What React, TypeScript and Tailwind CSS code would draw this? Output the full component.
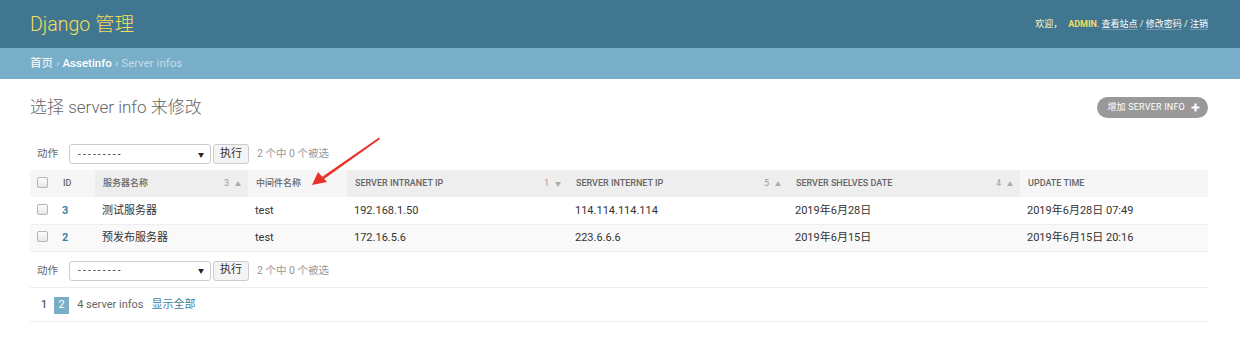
import React from 'react';

const font = { fontFamily: 'Roboto, "Noto Sans CJK SC", "Liberation Sans", sans-serif' };

const Box = () => (
  <span className="inline-block w-[11px] h-[11px] rounded-[2px] border border-[#b5b5b5] bg-gradient-to-b from-[#fdfdfd] to-[#e6e6e6] align-middle" />
);

const ActionBar = () => (
  <div className="flex items-center h-[22px] text-[10.5px] text-[#666]">
    <span className="ml-[7px] w-[32px]">动作</span>
    <div className="flex items-center justify-between w-[142px] h-[20px] border border-[#ccc] rounded-[3px] bg-white pl-[8px] pr-[6px] text-[#333]">
      <span className="tracking-[2.2px] text-[10px]">---------</span>
      <span className="text-[6px] text-[#222]">▼</span>
    </div>
    <div className="ml-[2px] flex items-center justify-center w-[36px] h-[20px] border border-[#ccc] rounded-[3px] bg-[#f4f4f4] text-[11px] text-[#333]">执行</div>
    <span className="ml-[8px] text-[#999]">2 个中 0 个被选</span>
  </div>
);

type Col = { label: string; w: number; num?: string; dir?: string; sorted?: boolean };
const cols: Col[] = [
  { label: '', w: 25 },
  { label: 'ID', w: 40 },
  { label: '服务器名称', w: 153, num: '3', dir: '▲', sorted: true },
  { label: '中间件名称', w: 99 },
  { label: 'SERVER INTRANET IP', w: 221, num: '1', dir: '▼', sorted: true },
  { label: 'SERVER INTERNET IP', w: 220, num: '5', dir: '▲', sorted: true },
  { label: 'SERVER SHELVES DATE', w: 232, num: '4', dir: '▲', sorted: true },
  { label: 'UPDATE TIME', w: 188 },
];

const rows = [
  ['3', '测试服务器', 'test', '192.168.1.50', '114.114.114.114', '2019年6月28日', '2019年6月28日 07:49'],
  ['2', '预发布服务器', 'test', '172.16.5.6', '223.6.6.6', '2019年6月15日', '2019年6月15日 20:16'],
];

export default function App() {
  return (
    <div className="relative w-[1240px] h-[347px] bg-white overflow-hidden" style={font}>
      {/* Header */}
      <div className="flex items-center justify-between h-[48px] bg-[#417690] px-[30px]">
        <div className="text-[19.5px] font-light text-[#f5dd5d] mt-[1px]">Django 管理</div>
        <div className="text-[9px] text-[#ffffcc] mr-[2px] mt-[1px]">
          欢迎，<span className="ml-[6px] font-bold text-[#f5dd5d]">ADMIN</span>.{' '}
          <span className="text-white border-b border-white/25">查看站点</span> /{' '}
          <span className="text-white border-b border-white/25">修改密码</span> /{' '}
          <span className="text-white border-b border-white/25">注销</span>
        </div>
      </div>
      {/* Breadcrumbs */}
      <div className="flex items-center h-[31px] bg-[#79aec8] px-[30px] text-[11.5px] text-[#c4dce8]">
        <span className="text-white">首页</span>
        <span className="mx-[3px]">›</span>
        <span className="text-white font-medium">Assetinfo</span>
        <span className="mx-[3px]">›</span>
        <span>Server infos</span>
      </div>

      <div className="px-[30px]">
        <div className="flex items-center justify-between h-[55px] pt-[2px]">
          <h1 className="text-[17px] font-light text-[#666]">选择 server info 来修改</h1>
          <div className="flex items-center h-[21px] pl-[10px] pr-[8px] mr-[2px] rounded-full bg-[#999] text-white text-[9px] tracking-[0.2px]">
            增加 SERVER INFO
            <svg className="ml-[6px]" width="9" height="9" viewBox="0 0 9 9">
              <path d="M4.5 0.5v8M0.5 4.5h8" stroke="white" strokeWidth="2.2" />
            </svg>
          </div>
        </div>

        <div className="mt-[9px]">
          <ActionBar />
        </div>

        <table className="mt-[5px] table-fixed border-collapse w-[1178px]">
          <colgroup>
            {cols.map((c, i) => (
              <col key={i} style={{ width: c.w }} />
            ))}
          </colgroup>
          <thead>
            <tr className="h-[27px]">
              {cols.map((c, i) => (
                <th
                  key={i}
                  className={`text-left font-medium text-[9px] text-[#666] px-[8px] ${c.sorted ? 'bg-[#eeeeee]' : 'bg-[#f6f6f6]'} ${i === 0 ? 'pl-[7px]' : ''}`}
                >
                  {i === 0 ? (
                    <span className="relative -top-[1px]"><Box /></span>
                  ) : (
                    <div className="flex items-center justify-between">
                      <span>{c.label}</span>
                      {c.num && (
                        <span className="flex items-center gap-[6px] text-[#999] font-normal text-[8.5px] mr-[-1px]">
                          {c.num}
                          <span className="text-[#aaa] text-[6px]">{c.dir}</span>
                        </span>
                      )}
                    </div>
                  )}
                </th>
              ))}
            </tr>
          </thead>
          <tbody>
            {rows.map((r, ri) => (
              <tr key={ri} className={`h-[27px] border-b border-[#eee] ${ri === 1 ? 'bg-[#f9f9f9]' : 'bg-white'}`}>
                <td className="pl-[7px]">
                  <span className="relative -top-[2px]"><Box /></span>
                </td>
                {r.map((v, i) => (
                  <td
                    key={i}
                    className={`px-[7px] pt-[2px] text-[11px] ${i === 0 ? 'font-bold text-[#447e9b]' : 'text-[#333]'}`}
                  >
                    {v}
                  </td>
                ))}
              </tr>
            ))}
          </tbody>
        </table>

        <div className="mt-[8px]">
          <ActionBar />
        </div>

        <div className="mt-[5px] w-[1178px] h-[35px] border-t border-b border-[#eee] flex items-center text-[11px] pt-[2px]">
          <span className="ml-[11px] text-[#333]">1</span>
          <span className="ml-[7px] flex items-center justify-center w-[15px] h-[17px] bg-[#79aec8] text-white">2</span>
          <span className="ml-[8px] text-[#666]">4 server infos</span>
          <span className="ml-[8px] text-[#447e9b]">显示全部</span>
        </div>
      </div>

      {/* red annotation arrow */}
      <svg className="absolute left-0 top-0 pointer-events-none" width="1240" height="347">
        <polygon points="379,137.5 380,139 324,179 322,177" fill="#e8332a" />
        <polygon points="312,185 318,172 327,182" fill="#e8332a" />
      </svg>
    </div>
  );
}
